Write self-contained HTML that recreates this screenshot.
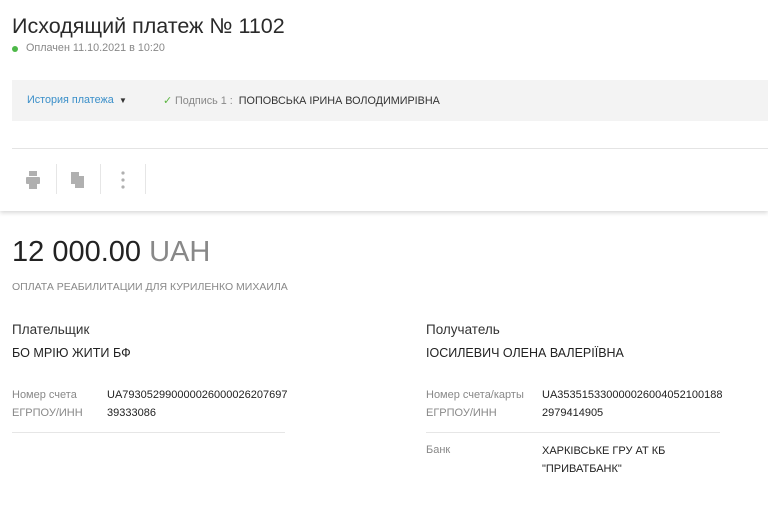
<!DOCTYPE html><html><head><meta charset="utf-8"><style>
body{margin:0;width:768px;height:516px;background:#fff;font-family:"Liberation Sans",sans-serif;color:#222;position:relative;overflow:hidden}
.a{position:absolute;white-space:nowrap}
.g{color:#888}
</style></head><body>
<div style="position:absolute;left:0;top:0;width:768px;height:211px;box-shadow:0 2px 4px rgba(0,0,0,.15)"></div>
<div class="a" style="left:12px;top:14px;font-size:21.5px;color:#2a2a2a">Исходящий платеж № 1102</div>
<div style="position:absolute;left:12px;top:46px;width:6px;height:6px;border-radius:50%;background:#4db848"></div>
<div class="a g" style="left:26px;top:42px;font-size:10.8px">Оплачен 11.10.2021 в 10:20</div>
<div style="position:absolute;left:12px;top:80px;width:756px;height:41px;background:#f3f3f3"></div>
<div class="a" style="left:27px;top:94px;font-size:10.8px;color:#3a8fc9">История платежа <span style="color:#333;font-size:8px">&nbsp;▼</span></div>
<div class="a" style="left:163px;top:94px;font-size:10.8px;color:#888"><span style="color:#5bb540">✓</span> Подпись 1 : &nbsp;<span style="color:#333">ПОПОВСЬКА ІРИНА ВОЛОДИМИРІВНА</span></div>
<div style="position:absolute;left:12px;top:148px;width:756px;height:1px;background:#e4e4e4"></div>
<svg style="position:absolute;left:25px;top:171px" width="16" height="18" viewBox="0 0 16 18" fill="#b0b0b0"><rect x="4" y="0" width="8" height="5"/><rect x="1" y="6" width="14" height="7" rx="1"/><rect x="4" y="12" width="8" height="6"/></svg>
<svg style="position:absolute;left:70px;top:171px" width="16" height="18" viewBox="0 0 16 18" fill="#b0b0b0"><rect x="1" y="1" width="8" height="12"/><rect x="5" y="5" width="9" height="12"/></svg>
<svg style="position:absolute;left:120px;top:170px" width="6" height="20" fill="#b0b0b0"><circle cx="3" cy="3" r="1.6"/><circle cx="3" cy="10" r="1.6"/><circle cx="3" cy="17" r="1.6"/></svg>
<div style="position:absolute;left:56px;top:164px;width:1px;height:30px;background:#e6e6e6"></div>
<div style="position:absolute;left:100px;top:164px;width:1px;height:30px;background:#e6e6e6"></div>
<div style="position:absolute;left:145px;top:164px;width:1px;height:30px;background:#e6e6e6"></div>
<div class="a" style="left:12px;top:236px;font-size:29px;color:#222">12 000.00 <span style="color:#888">UAH</span></div>
<div class="a g" style="left:12px;top:281px;font-size:10.5px">ОПЛАТА РЕАБИЛИТАЦИИ ДЛЯ КУРИЛЕНКО МИХАИЛА</div>
<div class="a" style="left:12px;top:322px;font-size:13.5px;color:#333">Плательщик</div>
<div class="a" style="left:12px;top:346px;font-size:12.6px;color:#222">БО МРІЮ ЖИТИ БФ</div>
<div class="a g" style="left:12px;top:389px;font-size:11px">Номер счета</div>
<div class="a" style="left:107px;top:389px;font-size:11px">UA793052990000026000026207697</div>
<div class="a g" style="left:12px;top:407px;font-size:11px">ЕГРПОУ/ИНН</div>
<div class="a" style="left:107px;top:407px;font-size:11px">39333086</div>
<div style="position:absolute;left:12px;top:432px;width:273px;height:1px;background:#e6e6e6"></div>
<div class="a" style="left:426px;top:322px;font-size:13.5px;color:#333">Получатель</div>
<div class="a" style="left:426px;top:346px;font-size:12.5px;color:#222">ІОСИЛЕВИЧ ОЛЕНА ВАЛЕРІЇВНА</div>
<div class="a g" style="left:426px;top:389px;font-size:11px">Номер счета/карты</div>
<div class="a" style="left:542px;top:389px;font-size:11px">UA353515330000026004052100188</div>
<div class="a g" style="left:426px;top:407px;font-size:11px">ЕГРПОУ/ИНН</div>
<div class="a" style="left:542px;top:407px;font-size:11px">2979414905</div>
<div style="position:absolute;left:426px;top:432px;width:294px;height:1px;background:#e6e6e6"></div>
<div class="a g" style="left:426px;top:444px;font-size:11px">Банк</div>
<div class="a" style="left:542px;top:442px;font-size:11px;line-height:18px">ХАРКІВСЬКЕ ГРУ АТ КБ<br>"ПРИВАТБАНК"</div>
</body></html>
